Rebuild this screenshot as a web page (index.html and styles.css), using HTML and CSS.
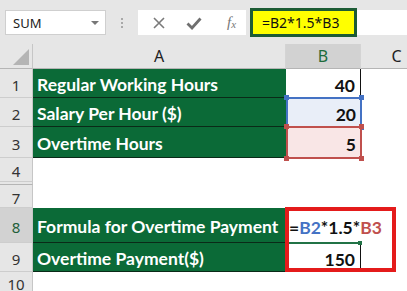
FILE: index.html
```html
<!DOCTYPE html>
<html lang="en">
<head>
    <meta charset="UTF-8">
    <title>Overtime Payment</title>
    <link rel="stylesheet" href="styles.css">
</head>
<body>
    <div class="toolbar">
        <div class="name-box">
            <span>SUM</span>
            <span class="arrow"></span>
        </div>
        <div class="dots"><i></i><i></i><i></i></div>
        <div class="buttons">
            <svg class="btn" width="14" height="14" viewBox="0 0 14 14"><path d="M2 2 L12 12 M12 2 L2 12" stroke="#7a7a7a" stroke-width="1.6"/></svg>
            <svg class="btn" width="16" height="14" viewBox="0 0 16 14"><path d="M1.5 7.5 L6 12 L14.5 2.5" stroke="#6f6f6f" stroke-width="2.8" fill="none"/></svg>
            <span class="fx">f<sub>x</sub></span>
        </div>
        <div class="formula">=B2*1.5*B3</div>
        <div class="formula-rest"></div>
    </div>

    <div class="sheet">
        <div class="corner"><span class="tri"></span></div>
        <div class="col-head">A</div>
        <div class="col-head active">B</div>
        <div class="col-head">C</div>

        <div class="row-head">1</div>
        <div class="cell label">Regular Working Hours</div>
        <div class="cell num b1">40</div>
        <div class="cell"></div>

        <div class="row-head">2</div>
        <div class="cell label">Salary Per Hour ($)</div>
        <div class="cell num b2">20<span class="sel blue"><i class="h tl"></i><i class="h tr"></i><i class="h bl"></i><i class="h br"></i></span></div>
        <div class="cell"></div>

        <div class="row-head">3</div>
        <div class="cell label">Overtime Hours</div>
        <div class="cell num b3">5<span class="sel red"><i class="h tl"></i><i class="h tr"></i><i class="h bl"></i><i class="h br"></i></span></div>
        <div class="cell"></div>

        <div class="row-head">4</div>
        <div class="cell"></div>
        <div class="cell"></div>
        <div class="cell"></div>

        <div class="row-head hidden"></div>
        <div class="cell"></div>
        <div class="cell"></div>
        <div class="cell"></div>

        <div class="row-head">7</div>
        <div class="cell"></div>
        <div class="cell"></div>
        <div class="cell"></div>

        <div class="row-head active">8</div>
        <div class="cell label">Formula for Overtime Payment</div>
        <div class="cell edit">
            =<span class="ref-blue">B2</span>*1.5*<span class="ref-red">B3</span>
            <span class="edit-line"></span>
            <span class="highlight"></span>
        </div>
        <div class="cell"></div>

        <div class="row-head">9</div>
        <div class="cell label">Overtime Payment($)</div>
        <div class="cell num b9">150</div>
        <div class="cell"></div>

        <div class="row-head">10</div>
        <div class="cell"></div>
        <div class="cell"></div>
        <div class="cell"></div>
    </div>
</body>
</html>
```

FILE: styles.css
```css
body {
    margin: 0;
    width: 407px;
    height: 291px;
    overflow: hidden;
    background: #fff;
    font-family: "Noto Sans", sans-serif;
}

/* formula bar */
.toolbar {
    display: flex;
    align-items: flex-start;
    height: 44px;
    padding: 10px 0 0 5px;
    box-sizing: border-box;
    background: #e6e6e6;
}

.name-box {
    display: flex;
    align-items: center;
    justify-content: space-between;
    width: 101px;
    height: 25px;
    padding: 0 6px 0 7px;
    box-sizing: border-box;
    background: #fff;
    border: 1px solid #cfcfcf;
    font-size: 13px;
    color: #222;
}

.arrow {
    border-left: 4px solid transparent;
    border-right: 4px solid transparent;
    border-top: 4px solid #777;
}

.dots {
    display: flex;
    flex-direction: column;
    gap: 2px;
    margin: 8px 15px 0 15px;
}
.dots i {
    width: 2px;
    height: 2px;
    background: #a8a8a8;
}

.buttons {
    display: flex;
    align-items: center;
    width: 108px;
    height: 25px;
    padding-left: 14px;
    box-sizing: border-box;
    background: #fff;
    gap: 20px;
}

.fx {
    font-family: "Liberation Serif", serif;
    font-style: italic;
    font-size: 15px;
    color: #777;
    margin-left: 5px;
}
.fx sub {
    font-size: 11px;
    vertical-align: -1px;
}

.formula {
    width: 107px;
    height: 29px;
    margin: -2px 0 0 4px;
    padding-left: 9px;
    box-sizing: border-box;
    border: 3px solid #1d5c36;
    background: #ffff00;
    font-size: 14px;
    line-height: 23px;
    color: #111;
}

.formula-rest {
    flex: 1;
    height: 25px;
    background: #fff;
}

/* worksheet */
.sheet {
    display: grid;
    grid-template-columns: 33px 253px 75px 72px;
    grid-template-rows: 25px 29px 29px 31px 24px 3px 23px 35px 29px 22px;
    width: 407px;
    overflow: hidden;
}

.corner {
    position: relative;
    background: #e6e6e6;
    border-right: 1px solid #c6c6c6;
    border-bottom: 1px solid #b5b5b5;
}
.tri {
    position: absolute;
    right: 3px;
    bottom: 3px;
    border-left: 16px solid transparent;
    border-bottom: 16px solid #b4b4b4;
}

.col-head {
    display: flex;
    align-items: center;
    justify-content: center;
    background: #e6e6e6;
    border-bottom: 1px solid #b5b5b5;
    border-right: 1px solid #d4d4d4;
    font-size: 16px;
    color: #222;
}
.col-head.active {
    background: #d2d2d2;
    color: #1d6b3c;
}

.row-head {
    display: flex;
    align-items: center;
    justify-content: center;
    padding-top: 3px;
    background: #e6e6e6;
    border-right: 1px solid #c6c6c6;
    border-bottom: 1px solid #cdcdcd;
    box-sizing: border-box;
    font-size: 15px;
    color: #333;
}
.row-head.active {
    background: #d2d2d2;
    color: #1f5f3a;
}
.row-head.hidden {
    padding: 0;
    border-bottom: 1px solid #b5b5b5;
}

.cell {
    position: relative;
    box-sizing: border-box;
    font-family: Lato, "Liberation Sans", sans-serif;
    font-weight: bold;
    font-size: 17.5px;
}

.label {
    display: flex;
    align-items: center;
    padding: 3px 0 0 4px;
    background: #0b6a37;
    color: #fff;
    border-bottom: 1px solid #0a2a18;
}

.num {
    display: flex;
    align-items: center;
    justify-content: flex-end;
    padding: 3px 5px 0 0;
    color: #111;
}

.b1 {
    border-right: 1px solid #111;
}
.b2 {
    background: #e9eef8;
}
.b3 {
    background: #f9e6e6;
}
.b9 {
    border-right: 1px solid #111;
}

/* range highlights around referenced cells */
.sel {
    position: absolute;
    inset: -1px -1px -1px 0;
    border: 2px solid #4472c4;
}
.sel.red {
    border-color: #c0504d;
}
.h {
    position: absolute;
    width: 5px;
    height: 5px;
    background: #4472c4;
}
.red .h {
    background: #c0504d;
}
.h.tl { left: -4px; top: -4px; }
.h.tr { right: -4px; top: -4px; }
.h.bl { left: -4px; bottom: -4px; }
.h.br { right: -4px; bottom: -4px; }

.edit {
    display: flex;
    align-items: center;
    padding: 4px 0 0 3px;
    white-space: nowrap;
    color: #111;
    z-index: 2;
}
.ref-blue { color: #4472c4; }
.ref-red { color: #c0504d; }

.edit-line {
    position: absolute;
    left: 2px;
    right: 2px;
    bottom: -1px;
    height: 2px;
    background: #217346;
}
.edit-line::after {
    content: "";
    position: absolute;
    right: -3px;
    top: -1px;
    width: 4px;
    height: 4px;
    background: #217346;
}

.highlight {
    position: absolute;
    left: -1px;
    top: -1px;
    width: 111px;
    height: 65px;
    border: 4px solid #e41b1b;
    box-sizing: border-box;
}
```
